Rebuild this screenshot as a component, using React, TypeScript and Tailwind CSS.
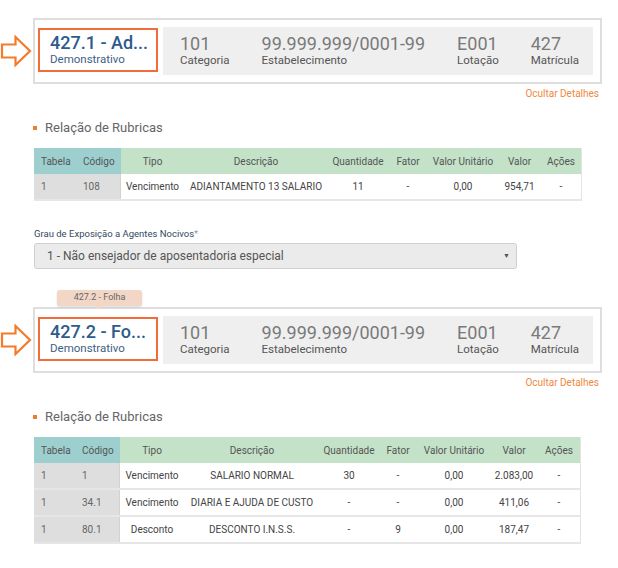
import React from 'react';

type Row = string[];

const FONT = "font-['Roboto','Liberation_Sans',sans-serif]";

// Outline arrow that points at the selected demonstrative
const PointerArrow = () => (
  <svg width="33" height="32" viewBox="0 0 33 32" fill="none">
    <polygon
      points="2,9.5 15.5,9.5 15.5,2 30,16 15.5,30 15.5,22.5 2,22.5"
      stroke="#f47b2a"
      strokeWidth="2.2"
      strokeLinejoin="miter"
      fill="#fff"
    />
  </svg>
);

const InfoItem = ({ value, label }: { value: string; label: string }) => (
  <div className="flex flex-col">
    <span className="text-[18px] leading-[19px] text-[#7a7a7a]">{value}</span>
    <span className="text-[11.5px] leading-[14px] text-[#555]">{label}</span>
  </div>
);

const DemoCard = ({ title, tooltip }: { title: string; tooltip?: string }) => (
  <div className="w-[602px]">
    <div className="flex items-center">
      <div className="w-[33px] flex items-center">
        <PointerArrow />
      </div>
      <div className="relative w-[569px] border-2 border-[#dedede] pt-[7px] pb-[7px] pl-[3px] pr-[7px] flex items-start gap-[5px]">
        {tooltip && (
          <div className="absolute left-[22px] top-[-19px] w-[85px] h-[16px] rounded-[3px] bg-[#f2d7c7] shadow-[0_1px_2px_rgba(0,0,0,0.15)] flex items-center justify-center text-[9px] text-[#666]">
            {tooltip}
            <span className="absolute left-[38px] bottom-[-3px] w-0 h-0 border-l-[3px] border-r-[3px] border-t-[3px] border-l-transparent border-r-transparent border-t-[#f2d7c7]" />
          </div>
        )}
        <div className="mt-[1px] w-[120px] h-[44px] border-2 border-[#f26b3a] pl-[10px] pt-[3px] flex flex-col">
          <span className="text-[18px] leading-[19px] font-medium text-[#2c5b8c] whitespace-nowrap">{title}</span>
          <span className="text-[11.5px] leading-[14px] text-[#3f6186]">Demonstrativo</span>
        </div>
        <div className="flex-1 h-[48px] bg-[#efefef] pl-[17px] pt-[7px] flex gap-[32px]">
          <InfoItem value="101" label="Categoria" />
          <InfoItem value="99.999.999/0001-99" label="Estabelecimento" />
          <InfoItem value="E001" label="Lotação" />
          <InfoItem value="427" label="Matrícula" />
        </div>
      </div>
    </div>
    <div className="mt-[4px] pr-[3px] text-right text-[10px] leading-[12px] text-[#f0883e]">Ocultar Detalhes</div>
  </div>
);

const SectionTitle = () => (
  <div className="mt-[20px] pl-[33px] flex items-center gap-[8px] h-[16px]">
    <span className="w-[4px] h-[4px] bg-[#f07b2a]" />
    <span className="text-[13px] leading-[16px] text-[#666]">Relação de Rubricas</span>
  </div>
);

const HEADERS = ['Tabela', 'Código', 'Tipo', 'Descrição', 'Quantidade', 'Fator', 'Valor Unitário', 'Valor', 'Ações'];

const RubricasTable = ({ cols, rows }: { cols: string; rows: Row[] }) => {
  const cell = (i: number) =>
    i === 0 ? 'justify-start pl-[7px]' : i === 1 ? 'justify-start pl-[5px]' : 'justify-center';
  return (
    <div className="mt-[12px] ml-[34px] w-fit border-r border-[#e4e4e4] text-[10px] text-[#555]">
      <div className={`grid ${cols} h-[26px]`}>
        {HEADERS.map((h, i) => (
          <div
            key={h}
            className={`flex items-center whitespace-nowrap ${cell(i)} ${i < 2 ? 'bg-[#9dcfcf]' : 'bg-[#c4e2c8]'}`}
          >
            {h}
          </div>
        ))}
      </div>
      {rows.map((r, ri) => (
        <div key={ri} className={`grid ${cols} h-[27px] border-b-2 border-[#e6e6e6]`}>
          {r.map((c, i) => (
            <div
              key={i}
              className={`flex items-center whitespace-nowrap ${cell(i)} ${
                i < 2 ? 'bg-[#dedede] text-[#666]' : 'bg-white text-[#444]'
              } ${i === 1 ? 'border-r border-[#d2d2d2]' : ''}`}
            >
              {c}
            </div>
          ))}
        </div>
      ))}
    </div>
  );
};

export default function App() {
  return (
    <div className={`w-[618px] h-[568px] bg-white overflow-hidden pt-[18px] ${FONT}`}>
      <DemoCard title="427.1 - Ad..." />
      <SectionTitle />
      <RubricasTable
        cols="grid-cols-[44px_43px_63px_144px_60px_40px_70px_43px_40px]"
        rows={[['1', '108', 'Vencimento', 'ADIANTAMENTO 13 SALARIO', '11', '-', '0,00', '954,71', '-']]}
      />

      {/* Grau de exposição */}
      <div className="mt-[27px] ml-[34px]">
        <div className="text-[9.5px] leading-[12px] text-[#34495e]">
          Grau de Exposição a Agentes Nocivos<span className="text-[#999]">*</span>
        </div>
        <div className="mt-[3px] w-[483px] h-[26px] rounded-[3px] border border-[#cfcfcf] bg-[#ebebeb] pl-[12px] pr-[6px] flex items-center justify-between">
          <span className="text-[12px] text-[#555]">1 - Não ensejador de aposentadoria especial</span>
          <span className="text-[7px] text-[#555]">▼</span>
        </div>
      </div>

      <div className="mt-[38px]">
        <DemoCard title="427.2 - Fo..." tooltip="427.2 - Folha" />
      </div>
      <SectionTitle />
      <RubricasTable
        cols="grid-cols-[43px_43px_64px_136px_58px_40px_72px_48px_42px]"
        rows={[
          ['1', '1', 'Vencimento', 'SALARIO NORMAL', '30', '-', '0,00', '2.083,00', '-'],
          ['1', '34.1', 'Vencimento', 'DIARIA E AJUDA DE CUSTO', '-', '-', '0,00', '411,06', '-'],
          ['1', '80.1', 'Desconto', 'DESCONTO I.N.S.S.', '-', '9', '0,00', '187,47', '-'],
        ]}
      />
    </div>
  );
}
